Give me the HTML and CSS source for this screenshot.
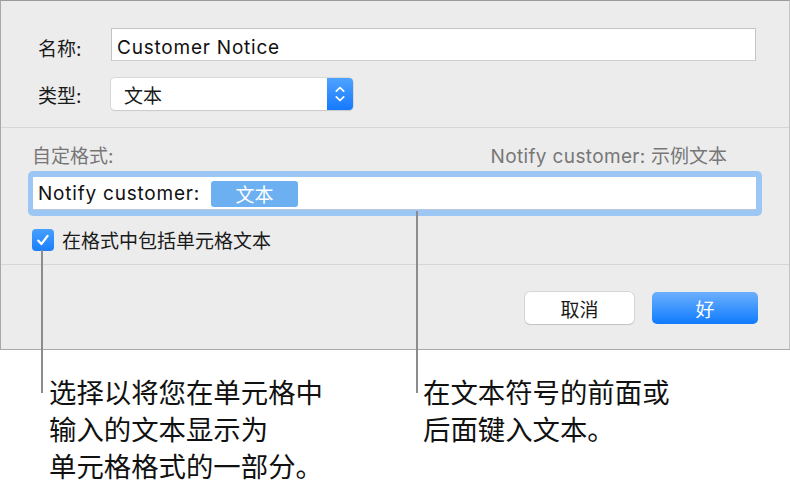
FILE: index.html
```html
<!DOCTYPE html>
<html lang="zh">
<head>
<meta charset="utf-8">
<title>自定格式</title>
<link rel="stylesheet" href="styles.css">
</head>
<body>
<div class="page">
  <div class="dialog">
    <section class="top">
      <div class="row row-name">
        <label class="label">名称:</label>
        <div class="text-input"><span class="latin">Customer Notice</span></div>
      </div>
      <div class="row row-type">
        <label class="label">类型:</label>
        <div class="select">
          <span class="select-value">文本</span>
          <span class="stepper">
            <svg width="12" height="22" viewBox="0 0 12 22"><path d="M2.3 8.2 L6 4.5 L9.7 8.2" fill="none" stroke="#fff" stroke-width="1.7" stroke-linecap="round" stroke-linejoin="round"/><path d="M2.3 13.8 L6 17.5 L9.7 13.8" fill="none" stroke="#fff" stroke-width="1.7" stroke-linecap="round" stroke-linejoin="round"/></svg>
          </span>
        </div>
      </div>
    </section>
    <section class="middle">
      <div class="fmt-head">
        <span class="muted">自定格式:</span>
        <span class="muted"><span class="latin latin-tight">Notify customer:</span>&nbsp;示例文本</span>
      </div>
      <div class="fmt-ring">
        <div class="fmt-field">
          <span class="fmt-text latin">Notify customer:</span>
          <span class="token">文本</span>
        </div>
      </div>
      <div class="check-row">
        <span class="checkbox">
          <svg width="22" height="22" viewBox="0 0 22 22"><path d="M6.2 11.6 L9.4 15 L15.6 6.8" fill="none" stroke="#fff" stroke-width="2.2" stroke-linecap="round" stroke-linejoin="round"/></svg>
        </span>
        <span class="check-label">在格式中包括单元格文本</span>
      </div>
    </section>
    <section class="bottom">
      <button class="btn btn-cancel">取消</button>
      <button class="btn btn-ok">好</button>
    </section>
  </div>
  <div class="callouts">
    <p class="note note-left">选择以将您在单元格中<br>输入的文本显示为<br>单元格格式的一部分。</p>
    <p class="note note-right">在文本符号的前面或<br>后面键入文本。</p>
  </div>
  <span class="leader leader-left"></span>
  <span class="leader leader-right"></span>
</div>
</body>
</html>
```

FILE: styles.css
```css
* { box-sizing: border-box; }

html, body {
  margin: 0;
  padding: 0;
  background: #ffffff;
}

body {
  font-family: "Inter", "Noto Sans CJK SC", sans-serif;
  font-size: 19px;
  color: #1a1a1a;
}

.latin {
  letter-spacing: 0.78px;
}

.latin-tight {
  letter-spacing: 0.35px;
}

.page {
  position: relative;
  width: 790px;
  height: 487px;
  overflow: hidden;
}

.dialog {
  height: 350px;
  background: #ececec;
  border: 1px solid #a9a9a9;
  border-top-color: #9a9a9a;
  border-right-color: #c4c4c4;
  display: flex;
  flex-direction: column;
}

.top {
  padding: 27px 33px 17px 37px;
  border-bottom: 1px solid #d6d6d6;
  display: flex;
  flex-direction: column;
  gap: 17px;
}

.row {
  display: flex;
  align-items: center;
}

.label {
  width: 73px;
  flex: none;
  color: #1a1a1a;
}

.row-name .label {
  padding-top: 5px;
}

.text-input {
  width: 645px;
  height: 33px;
  background: #fff;
  border: 1px solid #c4c4c4;
  border-bottom-color: #cfcfcf;
  padding: 5px 5px 0;
  display: flex;
  align-items: center;
  color: #111;
}

.select {
  width: 242px;
  height: 32px;
  background: #fff;
  border-radius: 4px;
  box-shadow: 0 0 0 0.5px #c6c6c6, 0 1px 1px rgba(0,0,0,0.12);
  display: flex;
  align-items: center;
  overflow: hidden;
}

.select-value {
  flex: 1;
  padding-left: 13px;
}

.stepper {
  width: 26px;
  height: 100%;
  background: linear-gradient(#4fa3ff, #1579ff);
  display: flex;
  align-items: center;
  justify-content: center;
}

.middle {
  height: 137px;
  border-bottom: 1px solid #d6d6d6;
  display: flex;
  flex-direction: column;
  padding-top: 14px;
}

.fmt-head {
  display: flex;
  justify-content: space-between;
  padding: 0 62px 0 31px;
  height: 24px;
  align-items: center;
}

.muted {
  color: #777777;
}

.fmt-ring {
  margin: 5px 0 0 27px;
  width: 734px;
  height: 45px;
  border-radius: 5px;
  background: #9cc6f3;
  padding: 6px 6px 6px 5px;
}

.fmt-field {
  height: 33px;
  background: #fff;
  box-shadow: inset 0 -1px 0 #b9c9db;
  display: flex;
  align-items: center;
  padding-left: 5px;
  color: #111;
}

.token {
  margin-left: 11px;
  width: 87px;
  height: 26px;
  border-radius: 3px;
  background: #6cb0f2;
  color: #fff;
  display: flex;
  align-items: center;
  justify-content: center;
}

.check-row {
  display: flex;
  align-items: center;
  margin: 10px 0 0 31px;
  gap: 8px;
}

.checkbox {
  width: 22px;
  height: 22px;
  border-radius: 4px;
  background: linear-gradient(#47a0ff, #1a7ffb);
  display: flex;
  align-items: center;
  justify-content: center;
}

.check-label {
  color: #1a1a1a;
}

.bottom {
  flex: 1;
  display: flex;
  justify-content: flex-end;
  align-items: flex-start;
  padding: 27px 31px 0 0;
  gap: 18px;
}

.btn {
  font: inherit;
  height: 32px;
  border-radius: 5px;
  border: none;
  padding: 0;
}

.btn-cancel {
  width: 109px;
  background: #fff;
  color: #1a1a1a;
  box-shadow: 0 0 0 0.5px #bdbdbd, 0 1px 1px rgba(0,0,0,0.15);
}

.btn-ok {
  width: 106px;
  background: linear-gradient(#6cb0fd, #0f7bff);
  color: #fff;
}

.callouts {
  display: flex;
  margin-top: 23px;
}

.note {
  margin: 0;
  font-family: "Noto Sans CJK SC", sans-serif;
  font-size: 27.4px;
  line-height: 37px;
  color: #111;
}

.note-left {
  padding-left: 49px;
  width: 423px;
}

.leader {
  position: absolute;
  width: 2px;
  background: #8c8c8c;
}

.leader-left {
  left: 41px;
  top: 250px;
  height: 143px;
}

.leader-right {
  left: 416px;
  top: 211px;
  height: 182px;
}
```
